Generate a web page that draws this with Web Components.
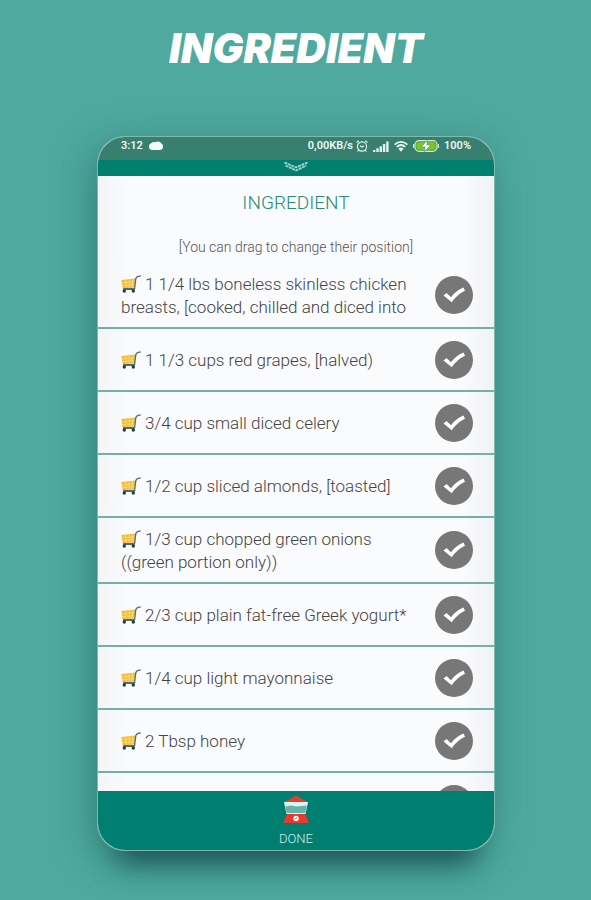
<!DOCTYPE html>
<html lang="en">
<head>
<meta charset="utf-8">
<meta name="viewport" content="width=device-width, initial-scale=1">
<title>Ingredient</title>
<style>
    body {
        margin: 0;
        background: #4fa99f;
        font-family: Roboto, "Liberation Sans", sans-serif;
    }
</style>
</head>
<body>
<ingredient-page></ingredient-page>

<script>
const cartIcon = `
    <svg class="cart" viewBox="0 0 20 18" aria-hidden="true">
        <path d="M0.3 5 14.6 3.6 13.6 12.6 1.8 13.6Z" fill="#f2bc3a"/>
        <path d="M1 7.8 14.2 6.8M1.5 10.6 13.8 9.7M4.6 5 5.2 13M8.2 4.6V13M11.6 4.2 11 12.6" stroke="#f9dc86" stroke-width="0.8" fill="none"/>
        <path d="M19.8 0.8 16.4 1.6 14.8 3.6 13.6 13.6H2.2" stroke="#52716c" stroke-width="1.3" fill="none"/>
        <path d="M2.2 14.4H13.5" stroke="#46605c" stroke-width="1"/>
        <circle cx="3.3" cy="16" r="1.7" fill="#283a3b"/>
        <circle cx="12.3" cy="16" r="1.7" fill="#283a3b"/>
    </svg>`;

class StatusBar extends HTMLElement {

    constructor() {
        super();
        this.shadowDOM = this.attachShadow({ mode: "open" });
    }

    connectedCallback() {
        this.render();
    }

    render() {
        this.shadowDOM.innerHTML = `
        <style>
            :host {
                display: flex;
                justify-content: space-between;
                flex: none;
                height: 23px;
                padding: 0 23px;
                box-sizing: border-box;
                background: #37806f;
                color: #eef8f4;
                font-size: 11px;
                font-weight: 600;
                line-height: 18px;
            }
            div {
                display: flex;
                align-items: center;
                height: 18px;
                gap: 6px;
            }
            .right {
                gap: 5px;
            }
            .right span:first-child {
                margin-right: -2px;
            }
            svg {
                display: block;
                flex: none;
            }
        </style>
        <div>
            <span>3:12</span>
            <svg width="14" height="10" viewBox="0 0 14 10" fill="#f4fbf8"><rect y="2" width="14" height="7" rx="3.5"/><circle cx="5" cy="4" r="3"/><circle cx="9" cy="3.8" r="3.2"/></svg>
        </div>
        <div class="right">
            <span>0,00KB/s</span>
            <svg width="12" height="12" viewBox="0 0 12 12" fill="none" stroke="#dcefe8"><circle cx="6" cy="6.5" r="4.6" stroke-width="1.2"/><path d="M0.6 2.5 2.8 0.7M11.4 2.5 9.2 0.7M4 5.8 6 7 8 5.8M2.6 10.2 1.6 11.5M9.4 10.2 10.4 11.5" stroke-width="1.2"/></svg>
            <svg width="16" height="11" viewBox="0 0 16 11" fill="#e4f3ed"><path d="M0 9H2.4V11H0ZM3.3 7.3H5.7V11H3.3ZM6.6 5.2H9V11H6.6ZM9.9 3H12.3V11H9.9ZM13.2 0.5H15.6V11H13.2Z"/></svg>
            <svg width="14" height="11" viewBox="0 0 14 11" fill="none" stroke="#e8f6f1" stroke-width="1.7"><path d="M0.6 3.6Q7-1.8 13.4 3.6M2.7 5.8Q7 2.2 11.3 5.8"/><path d="M4.3 7.6Q7 5.4 9.7 7.6L7 10.8Z" fill="#e8f6f1" stroke="none"/></svg>
            <svg width="26" height="12" viewBox="0 0 26 12"><rect x="2" y="0.7" width="22" height="10.6" rx="4" fill="#4f9b46" stroke="#cfe9cf" stroke-width="1.2"/><path d="M0.6 4V8M25.4 4V8" stroke="#cfe9cf" stroke-width="1.2"/><rect x="3.5" y="2.3" width="19" height="7.4" rx="2.5" fill="#7cc32d"/><path d="M14.2 0.3 8.4 6.9H12.1L11.3 11.8 17.8 5H13.9Z" fill="#fff" stroke="#37806f" stroke-width="0.5"/></svg>
            <span>100%</span>
        </div>
        `;
    }
}

class IngredientItem extends HTMLElement {

    constructor() {
        super();
        this.shadowDOM = this.attachShadow({ mode: "open" });
    }

    connectedCallback() {
        this.render();
    }

    render() {
        this.shadowDOM.innerHTML = `
        <style>
            :host {
                display: block;
                border-bottom: 2px solid #76b0a4;
            }
            label {
                display: flex;
                align-items: center;
                justify-content: space-between;
                gap: 12px;
                min-height: 61px;
                padding: 0 21px 0 23px;
                box-sizing: border-box;
                cursor: pointer;
            }
            .text {
                flex: 1;
                padding: 10px 0 8px;
                color: #444;
                font-size: 17px;
                font-weight: 300;
                line-height: 23px;
            }
            .cart {
                width: 20px;
                height: 18px;
                margin-right: 4px;
                vertical-align: -3px;
            }
            .tick {
                display: grid;
                flex: none;
                place-items: center;
            }
            .tick > * {
                grid-area: 1 / 1;
            }
            input {
                appearance: none;
                width: 38px;
                height: 38px;
                margin: 0;
                border-radius: 50%;
                background: #777;
            }
            input:checked {
                background: #007f70;
            }
            .tick svg {
                width: 38px;
                height: 38px;
                pointer-events: none;
            }
        </style>
        <label>
            <span class="text">${cartIcon}<slot></slot></span>
            <span class="tick">
                <input type="checkbox">
                <svg viewBox="0 0 38 38" aria-hidden="true"><path d="M8.5 19.5 11.5 17 16 21.2Q21 14.5 28.5 11.5L30 14.8Q22 18.5 16.8 26.2Z" fill="#fff"/></svg>
            </span>
        </label>
        `;
    }
}

class DoneBar extends HTMLElement {

    constructor() {
        super();
        this.shadowDOM = this.attachShadow({ mode: "open" });
    }

    connectedCallback() {
        this.render();
    }

    render() {
        this.shadowDOM.innerHTML = `
        <style>
            :host {
                display: block;
                flex: none;
            }
            button {
                display: flex;
                flex-direction: column;
                align-items: center;
                gap: 6px;
                width: 100%;
                padding: 4px 0 1px;
                border: 0;
                background: #007f70;
                color: #d5ebe6;
                font: 300 13px/20px Roboto, "Liberation Sans", sans-serif;
                cursor: pointer;
            }
            svg {
                display: block;
            }
        </style>
        <button type="button">
            <svg width="26" height="28" viewBox="0 0 26 28" aria-hidden="true">
                <path d="M10.5 2Q13-1 15.5 2L25 7H1Z" fill="#e2412f"/>
                <path d="M1 7H25L22.5 19H3.5Z" fill="#dff3f0"/>
                <path d="M2.3 11.5 8 10.5 13 11.5 23.7 10.5 22.3 18H3.7Z" fill="#62b5aa"/>
                <path d="M4 19H22L26 28H0Z" fill="#e73a30"/>
                <circle cx="13" cy="23.4" r="2.7" fill="#fff"/>
                <path d="M11.8 24.6 14.2 22.2" stroke="#e73a30"/>
            </svg>
            <slot></slot>
        </button>
        `;
    }
}

class PhoneScreen extends HTMLElement {

    constructor() {
        super();
        this.shadowDOM = this.attachShadow({ mode: "open" });
    }

    connectedCallback() {
        this.render();
    }

    render() {
        this.shadowDOM.innerHTML = `
        <style>
            :host {
                display: flex;
                flex-direction: column;
                overflow: hidden;
                border: 1px solid #82b8aa;
                border-radius: 28px;
                background: linear-gradient(90deg, #f3f5f7, #fafbfc 8% 92%, #f1f2f7);
                box-shadow: 0 32px 28px -20px rgba(15, 65, 70, 0.75), -6px 8px 40px rgba(15, 85, 80, 0.4);
            }
            .handle {
                display: flex;
                flex: none;
                justify-content: center;
                height: 16px;
                background: #007f70;
            }
            .content {
                flex: 1;
                min-height: 0;
                overflow: hidden;
            }
            h2 {
                margin: 15px 0 0;
                color: #288b78;
                font-size: 19px;
                font-weight: 300;
                line-height: 24px;
                text-align: center;
            }
            p {
                margin: 22px 0 6px;
                color: #555;
                font-size: 14px;
                font-weight: 300;
                line-height: 20px;
                text-align: center;
            }
        </style>
        <status-bar></status-bar>
        <div class="handle">
            <svg width="24" height="12" viewBox="0 0 24 12" fill="none" stroke="#a9d5cd" stroke-width="1.8" aria-hidden="true"><path d="M0.5 2.5 12 7.5 23.5 2.5M1.5 5.5 12 10.5 22.5 5.5" stroke-dasharray="3 0.7"/></svg>
        </div>
        <div class="content">
            <h2>INGREDIENT</h2>
            <p>[You can drag to change their position]</p>
            <slot></slot>
        </div>
        <done-bar>DONE</done-bar>
        `;
    }
}

class IngredientPage extends HTMLElement {

    constructor() {
        super();
        this.shadowDOM = this.attachShadow({ mode: "open" });
    }

    connectedCallback() {
        this.render();
    }

    render() {
        this.shadowDOM.innerHTML = `
        <style>
            :host {
                display: flex;
                flex-direction: column;
                height: 100vh;
                padding: 24px 96px 49px 97px;
                box-sizing: border-box;
            }
            h1 {
                flex: none;
                margin: 0 0 64px;
                color: #fff;
                font-family: Inter, "Liberation Sans", sans-serif;
                font-size: 41px;
                font-style: italic;
                font-weight: 900;
                line-height: 48px;
                text-align: center;
            }
            phone-screen {
                flex: 1;
                min-height: 0;
            }
        </style>
        <h1>INGREDIENT</h1>
        <phone-screen>
            <ingredient-item>1 1/4 lbs boneless skinless chicken breasts, [cooked, chilled and diced into</ingredient-item>
            <ingredient-item>1 1/3 cups red grapes, [halved)</ingredient-item>
            <ingredient-item>3/4 cup small diced celery</ingredient-item>
            <ingredient-item>1/2 cup sliced almonds, [toasted]</ingredient-item>
            <ingredient-item>1/3 cup chopped green onions ((green portion only))</ingredient-item>
            <ingredient-item>2/3 cup plain fat-free Greek yogurt*</ingredient-item>
            <ingredient-item>1/4 cup light mayonnaise</ingredient-item>
            <ingredient-item>2 Tbsp honey</ingredient-item>
            <ingredient-item></ingredient-item>
        </phone-screen>
        `;
    }
}

customElements.define("status-bar", StatusBar);
customElements.define("ingredient-item", IngredientItem);
customElements.define("done-bar", DoneBar);
customElements.define("phone-screen", PhoneScreen);
customElements.define("ingredient-page", IngredientPage);
</script>
</body>
</html>
